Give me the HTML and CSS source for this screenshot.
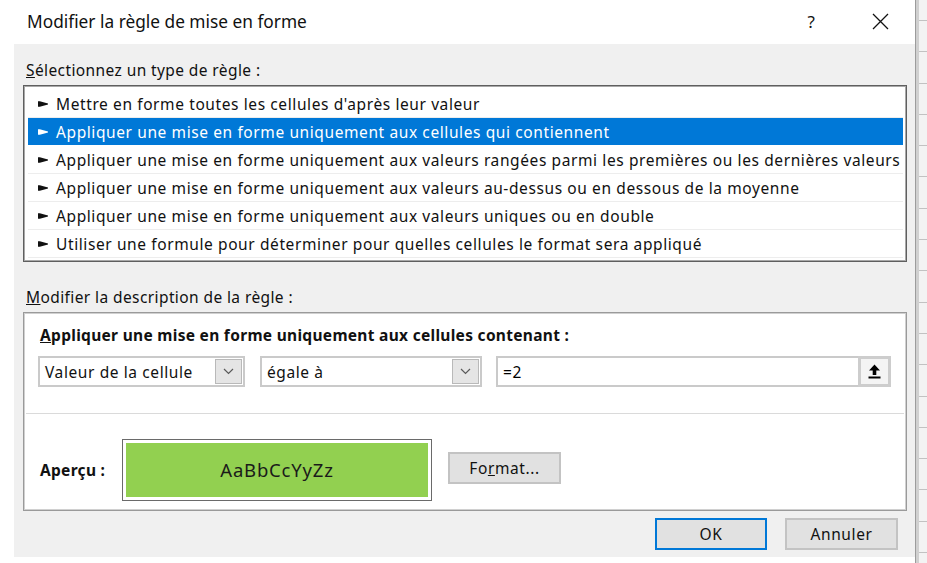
FILE: index.html
```html
<!DOCTYPE html>
<html lang="fr">
<head>
<meta charset="utf-8">
<title>Modifier la règle de mise en forme</title>
<link rel="stylesheet" href="styles.css">
</head>
<body>
<div class="screen">
  <div class="dialog">
    <div class="titlebar">
      <span class="title">Modifier la règle de mise en forme</span>
      <span class="help">?</span>
      <span class="close"><svg width="17" height="17" viewBox="0 0 17 17"><path d="M1 1 L16 16 M16 1 L1 16" stroke="#111" stroke-width="1.3" fill="none"/></svg></span>
    </div>
    <div class="body">
      <div class="label"><u>S</u>électionnez un type de règle :</div>
      <div class="listbox">
        <div class="row"><svg class="arrow" width="10" height="6" viewBox="0 0 10 6"><path d="M0 0.3 H1.8 L10 2.6 V3.4 L1.8 5.7 H0 Z"/></svg><span>Mettre en forme toutes les cellules d'après leur valeur</span></div>
        <div class="row selected"><svg class="arrow" width="10" height="6" viewBox="0 0 10 6"><path d="M0 0.3 H1.8 L10 2.6 V3.4 L1.8 5.7 H0 Z"/></svg><span>Appliquer une mise en forme uniquement aux cellules qui contiennent</span></div>
        <div class="row"><svg class="arrow" width="10" height="6" viewBox="0 0 10 6"><path d="M0 0.3 H1.8 L10 2.6 V3.4 L1.8 5.7 H0 Z"/></svg><span>Appliquer une mise en forme uniquement aux valeurs rangées parmi les premières ou les dernières valeurs</span></div>
        <div class="row"><svg class="arrow" width="10" height="6" viewBox="0 0 10 6"><path d="M0 0.3 H1.8 L10 2.6 V3.4 L1.8 5.7 H0 Z"/></svg><span>Appliquer une mise en forme uniquement aux valeurs au-dessus ou en dessous de la moyenne</span></div>
        <div class="row"><svg class="arrow" width="10" height="6" viewBox="0 0 10 6"><path d="M0 0.3 H1.8 L10 2.6 V3.4 L1.8 5.7 H0 Z"/></svg><span>Appliquer une mise en forme uniquement aux valeurs uniques ou en double</span></div>
        <div class="row"><svg class="arrow" width="10" height="6" viewBox="0 0 10 6"><path d="M0 0.3 H1.8 L10 2.6 V3.4 L1.8 5.7 H0 Z"/></svg><span>Utiliser une formule pour déterminer pour quelles cellules le format sera appliqué</span></div>
      </div>
      <div class="label label2"><u>M</u>odifier la description de la règle :</div>
      <div class="desc">
        <div class="desc-title"><u>A</u>ppliquer une mise en forme uniquement aux cellules contenant :</div>
        <div class="controls">
          <div class="combo combo1"><span class="combo-text">Valeur de la cellule</span><span class="drop"><svg width="11" height="7" viewBox="0 0 11 7"><path d="M1 1 L5.5 5.5 L10 1" stroke="#5a5a5a" stroke-width="1.2" fill="none"/></svg></span></div>
          <div class="combo combo2"><span class="combo-text">égale à</span><span class="drop"><svg width="11" height="7" viewBox="0 0 11 7"><path d="M1 1 L5.5 5.5 L10 1" stroke="#5a5a5a" stroke-width="1.2" fill="none"/></svg></span></div>
          <div class="field"><span class="field-text">=2</span><span class="ref-btn"><svg width="13" height="15" viewBox="0 0 13 15"><path d="M6.5 0.5 L12 6.5 H8.3 V11 H4.7 V6.5 H1 Z" fill="#000"/><rect x="0.5" y="12.5" width="12" height="2" fill="#000"/></svg></span></div>
        </div>
        <div class="sep"></div>
        <div class="preview-row">
          <span class="preview-label">Aperçu :</span>
          <div class="preview"><div class="swatch">AaBbCcYyZz</div></div>
          <div class="btn fmt">Fo<u>r</u>mat...</div>
        </div>
      </div>
      <div class="actions">
        <div class="btn ok">OK</div>
        <div class="btn cancel">Annuler</div>
      </div>
    </div>
  </div>
  <div class="excel"></div>
</div>
</body>
</html>
```
FILE: styles.css
```css
* { box-sizing: border-box; }
body {
  margin: 0;
  background: #ffffff;
  font-family: "Noto Sans", "Open Sans", sans-serif;
  color: #000;
}
.screen {
  display: flex;
  width: 927px;
  height: 563px;
  overflow: hidden;
}
.dialog {
  width: 915px;
  height: 563px;
  display: flex;
  flex-direction: column;
}
.titlebar {
  height: 44px;
  display: flex;
  align-items: center;
  padding: 0 26px 2px 27px;
}
.title {
  flex: 1;
  font-size: 17.3px;
  color: #111;
}
.help {
  font-size: 17px;
  margin-right: 57px;
  color: #111;
}
.close { display: flex; }

.body {
  margin-left: 14px;
  height: 513px;
  background: #f0f0f0;
  padding: 16px 8px 0 9px;
  display: flex;
  flex-direction: column;
}
.label {
  font-size: 15.5px;
  letter-spacing: 0.4px;
  line-height: 20px;
  height: 20px;
  padding-left: 3px;
  color: #111;
}
.listbox {
  margin-top: 5px;
  height: 177px;
  background: #fff;
  border: 1px solid #5f5f5f;
  box-shadow: inset 0 0 0 1px #a8a8a8;
  padding: 4px 3px 0 4px;
}
.row {
  height: 28px;
  display: flex;
  align-items: center;
  padding-left: 10px;
  border-bottom: 1px solid #ededed;
  font-size: 15.5px;
  letter-spacing: 0.6px;
  white-space: nowrap;
  color: #111;
}
.row .arrow {
  fill: #111;
  margin-right: 8px;
  flex: none;
}
.row.selected {
  background: #0078d7;
  color: #fff;
  border-bottom-color: #fff;
}
.row.selected .arrow { fill: #fff; }
.label2 { margin-top: 25px; }

.desc {
  margin-top: 5px;
  height: 199px;
  background: #fff;
  border: 1px solid #9a9a9a;
  box-shadow: inset 0 0 0 1px #d0d0d0;
  padding: 12px 2px 0 2px;
  display: flex;
  flex-direction: column;
}
.desc-title {
  font-size: 15.5px;
  letter-spacing: 0.3px;
  font-weight: bold;
  line-height: 20px;
  padding-left: 14px;
  color: #111;
}
.controls {
  margin-top: 11px;
  height: 31px;
  display: flex;
  padding-left: 12px;
}
.combo {
  height: 31px;
  border: 2px solid #cacaca;
  background: #fff;
  display: flex;
  align-items: center;
  justify-content: space-between;
  padding: 0 1px 0 5px;
  font-size: 15.5px;
  letter-spacing: 0.6px;
  color: #111;
}
.combo1 { width: 207px; }
.combo2 { width: 222px; margin-left: 15px; }
.drop {
  width: 27px;
  height: 25px;
  background: #e5e5e5;
  border: 1px solid #b9b9b9;
  display: flex;
  align-items: center;
  justify-content: center;
}
.field {
  width: 395px;
  margin-left: 14px;
  height: 31px;
  border: 2px solid #cacaca;
  display: flex;
  align-items: center;
  justify-content: space-between;
  padding-left: 5px;
  font-size: 15.5px;
  letter-spacing: 0.6px;
}
.ref-btn {
  width: 33px;
  height: 31px;
  margin: -2px -2px -2px 0;
  border: 3px solid #cdcdcd;
  background: #f4f4f4;
  display: flex;
  align-items: center;
  justify-content: center;
}
.sep {
  margin-top: 26px;
  height: 1px;
  background: #dadada;
}
.preview-row {
  margin-top: 25px;
  display: flex;
  align-items: center;
  padding-left: 14px;
}
.preview-label {
  font-size: 15.5px;
  letter-spacing: 0.3px;
  font-weight: bold;
  width: 82px;
  color: #111;
}
.preview {
  width: 310px;
  height: 62px;
  border: 1px solid #6a6a6a;
  padding: 3px;
  background: #fff;
}
.swatch {
  height: 100%;
  background: #92d050;
  display: flex;
  align-items: center;
  justify-content: center;
  font-size: 18.5px;
  letter-spacing: 0.8px;
  color: #1a1a1a;
  padding-bottom: 2px;
}
.btn {
  display: flex;
  align-items: center;
  justify-content: center;
  background: #e1e1e1;
  border: 2px solid #c3c3c3;
  font-size: 15.5px;
  letter-spacing: 0.6px;
  color: #111;
}
.fmt {
  width: 113px;
  height: 32px;
  margin-left: 16px;
  margin-top: -4px;
}
.actions {
  margin-top: 7px;
  display: flex;
  justify-content: flex-end;
  gap: 18px;
  padding-right: 9px;
}
.ok {
  width: 112px;
  height: 32px;
  border-color: #0078d7;
}
.cancel {
  width: 113px;
  height: 32px;
}
.excel {
  flex: 1;
  height: 563px;
  border-left: 1px solid #9c9c9c;
  background:
    linear-gradient(90deg, #d0d0d0 0, #d0d0d0 3px, transparent 3px),
    repeating-linear-gradient(180deg, transparent 0, transparent 20px, #c2c2c2 20px, #c2c2c2 21px, transparent 21px, transparent 31.3px),
    #f3f3f3;
}
```
